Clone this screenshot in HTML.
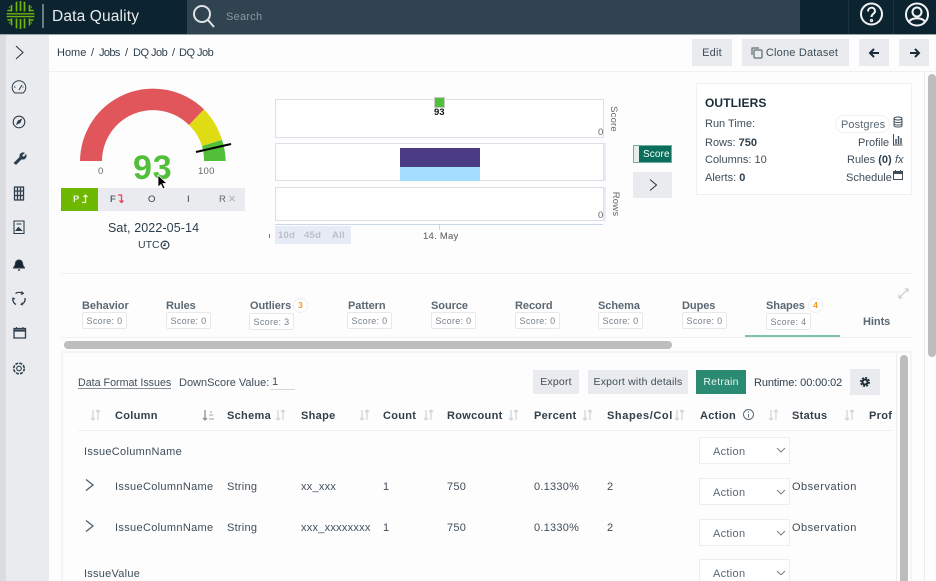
<!DOCTYPE html>
<html><head><meta charset="utf-8"><style>
*{box-sizing:border-box}
html,body{margin:0;padding:0;width:936px;height:581px;overflow:hidden;background:#fdfdfd}
body{position:relative;font-family:"Liberation Sans",sans-serif;font-size:11px;color:#3f4d5a}
.a{position:absolute}
.t{position:absolute;white-space:nowrap;line-height:14px;letter-spacing:.25px}
.c{letter-spacing:0}
.b{font-weight:bold}
.btn{position:absolute;background:#e9ebee;color:#3f4d5a;text-align:center;white-space:nowrap;letter-spacing:.2px}
.sc{position:absolute;width:45px;height:17px;border:1px solid #e6e8ea;border-radius:2px;background:#fff;font-size:9px;color:#77818a;text-align:center;line-height:17px;letter-spacing:.3px}
.tb{position:absolute;font-weight:bold;color:#5b6873;white-space:nowrap;font-size:11px;line-height:14px;letter-spacing:-.05px}
.bd{position:absolute;width:15px;height:15px;border:1px solid #eee;border-radius:50%;background:#fff;color:#f7941d;font-size:8.5px;font-weight:bold;text-align:center;line-height:13px}
.th{position:absolute;font-weight:bold;color:#333f49;white-space:nowrap;line-height:14px;top:409px;letter-spacing:.3px}
.sel{position:absolute;left:699px;width:91px;height:27px;border:1px solid #eceef0;background:#fff;color:#5a6670;line-height:29px;padding-left:13px;letter-spacing:.3px}
</style></head><body>

<!-- top bar -->
<div class="a" style="left:0;top:0;width:936px;height:34px;background:#0c2430"></div>
<div class="a" style="left:187px;top:0;width:613px;height:34px;background:#2f4350"></div>
<div class="a" style="left:0;top:34px;width:936px;height:1px;background:#9aa3a9"></div>
<svg class="a" style="left:0;top:0" width="60" height="34" fill="none" stroke="#6fb50a" stroke-width="2">
<defs><clipPath id="lc"><circle cx="20.500" cy="15" r="14"/></clipPath></defs>
<g clip-path="url(#lc)">
<path d="M6 13.800H35M6 16.600H35" stroke-width="1.400"/>
<path d="M20.500 1v10M20.500 19v11M16.500 1v10.500M16.500 18.500v11M24.500 1v10.500M24.500 18.500v11" stroke-width="1.700"/>
<path d="M11.500 5v6.500M11.500 18.500v7M29.500 5v6.500M29.500 18.500v7" stroke-width="1.700"/>
<path d="M6 10.500h6M29 10.500h6M6 20h6M29 20h6M7 7h3M31 7h3M7 23h3M31 23h3" stroke-width="1.500"/>
</g>
<path d="M43 4V28" stroke="#8d979d" stroke-width="1.500"/>
</svg>
<div class="t" style="left:52px;top:7px;font-size:15.500px;line-height:19px;color:#e8ecee;letter-spacing:.15px">Data Quality</div>
<svg class="a" style="left:191px;top:3px" width="26" height="26" fill="none" stroke="#e0e4e6" stroke-width="2"><circle cx="11" cy="11" r="8"/><path d="M17 17l6 7"/></svg>
<div class="t" style="left:226px;top:10px;font-size:11px;color:#8a98a1">Search</div>
<div class="a" style="left:848px;top:0;width:1px;height:34px;background:#1c3542"></div>
<div class="a" style="left:893px;top:0;width:1px;height:34px;background:#1c3542"></div>
<svg class="a" style="left:859px;top:2px" width="25" height="25" fill="none" stroke="#f2f4f5" stroke-width="2"><circle cx="12.500" cy="12" r="10.500"/><path d="M9 9.500c0-5 7-5 7-.5 0 3-3.500 2.500-3.500 6"/><circle cx="12.500" cy="18.500" r=".6"/></svg>
<svg class="a" style="left:904px;top:2px" width="26" height="26" fill="none" stroke="#f2f4f5" stroke-width="2"><circle cx="13" cy="12.500" r="11"/><circle cx="13" cy="10" r="4.500"/><path d="M5 20c2-5 14-5 16 0"/></svg>

<!-- sidebar -->
<div class="a" style="left:0;top:35px;width:49px;height:546px;background:#e9ebee"></div>
<div class="a" style="left:0;top:35px;width:6px;height:546px;background:#dadcdf"></div>
<svg class="a" style="left:0;top:35px" width="49" height="546" fill="none" stroke="#2c3e4c" stroke-width="1.100">
<path d="M16 11l7 6.500-7 6.500"/>
<path d="M15 58a6.800 6.800 0 1 1 8 0zM19 55l3-5M14 52h1.500M22.500 52h1" stroke-width="1"/>
<circle cx="19" cy="87" r="5.800"/><path d="M17 89l1.200-3 3-1.500-1.200 3z" fill="#2c3e4c"/>
<path d="M14 128l6-6c-1-3 2-5 4.500-4l-2.500 2 .5 1.500 1.500.5 2-2.500c1 3-1.500 5.500-4.500 4.500l-5.500 5.500z" fill="#2c3e4c" stroke-width=".6"/>
<path d="M14.500 152h9v13h-9zM17.500 152v13M20.500 152v13M14.500 156h9M14.500 160.500h9" stroke-width="1.300"/>
<path d="M14 186h10v12.500H14z"/><path d="M16 195.500l2.500-3 3 3zM16.500 189h5" fill="#2c3e4c" stroke-width="1"/>
<path d="M13.500 233c0-1 2-1.500 2-4.500a3.500 3.500 0 0 1 7 0c0 3 2 3.500 2 4.500z" fill="#15242f"/><path d="M18 235h2" stroke-width="1.400"/>
<path d="M15.500 258.500a6 6 0 0 1 7 0M25 263a6 6 0 0 1-2.500 6M16 269.500a6 6 0 0 1-3-6" stroke-width="1.300"/>
<path d="M21.500 256.500l2 2-2.500 1M23 270l-2-.5 1.500-2M12.500 265.500l.5-2.500 2 1" stroke-width="1"/>
<path d="M14 293.500h11.500v9.500H14z" stroke-width="1.300"/><path d="M14 295.500h11.500" stroke-width="2.200"/><path d="M16.500 292v2M23 292v2"/>
<circle cx="19" cy="333.500" r="2.300"/><circle cx="19" cy="333.500" r="5.300" stroke-dasharray="3 1.200" stroke-width="1.600"/>
</svg>

<!-- breadcrumb -->
<div class="a" style="left:49px;top:71px;width:887px;height:1px;background:#eef0f1"></div>
<div class="t c" style="left:57px;top:46px;color:#2c3e4c">Home</div>
<div class="t c" style="left:91px;top:46px;color:#2c3e4c">/</div>
<div class="t" style="left:99px;top:46px;color:#2c3e4c;letter-spacing:-.6px">Jobs</div>
<div class="t c" style="left:125px;top:46px;color:#2c3e4c">/</div>
<div class="t" style="left:133px;top:46px;color:#2c3e4c;letter-spacing:-.5px">DQ Job</div>
<div class="t c" style="left:172px;top:46px;color:#2c3e4c">/</div>
<div class="t" style="left:179px;top:46px;color:#2c3e4c;letter-spacing:-.5px">DQ Job</div>
<div class="btn" style="left:692px;top:39px;width:40px;height:27px;line-height:28px">Edit</div>
<div class="btn" style="left:742px;top:39px;width:107px;height:27px;line-height:28px;padding-left:13px">Clone Dataset</div>
<svg class="a" style="left:751px;top:47px" width="13" height="12" fill="none" stroke="#3f4d5a"><path d="M1 8V1h7"/><rect x="3" y="3" width="8" height="8" rx="1"/></svg>
<div class="btn" style="left:859px;top:39px;width:30px;height:27px"></div>
<div class="btn" style="left:899px;top:39px;width:30px;height:27px"></div>
<svg class="a" style="left:868px;top:46px" width="54" height="14" fill="none" stroke="#1c2c38" stroke-width="2"><path d="M11 7H2M6 3L2 7l4 4M42 7h9M47 3l4 4-4 4"/></svg>

<!-- scrollbars -->
<div class="a" style="left:924px;top:72px;width:1px;height:509px;background:#eceef0"></div>
<div class="a" style="left:928px;top:74px;width:8px;height:283px;background:#bdbdbd;border-radius:4px"></div>

<!-- gauge -->
<svg class="a" style="left:70px;top:80px" width="170" height="90">
<path d="M10 81A73 73 0 0 1 134 29.400L119 45A51 51 0 0 0 32 81Z" fill="#e0565b"/>
<path d="M134 29.400A73 73 0 0 1 152 60L132 66A51 51 0 0 0 119 45Z" fill="#e0dc14"/>
<path d="M152 60A73 73 0 0 1 155.700 81H134A51 51 0 0 0 132 66Z" fill="#52bf3b"/>
<path d="M126 72L161 64" stroke="#000" stroke-width="2"/>
</svg>
<div class="t" style="left:98px;top:165px;font-size:9.500px;color:#666">0</div>
<div class="t" style="left:198px;top:165px;font-size:9.500px;color:#666">100</div>
<div class="t" style="left:133px;top:149px;font-size:34px;line-height:38px;color:#52bf3b;font-weight:bold;letter-spacing:.8px">93</div>
<div class="a" style="left:61px;top:188px;width:184px;height:23px;background:#e9ebee"></div>
<div class="a" style="left:61px;top:188px;width:37px;height:23px;background:#6eb800"></div>
<div class="t b" style="left:73px;top:193px;color:#eef7dc;font-size:9.500px">P</div>
<svg class="a" style="left:81px;top:194px" width="8" height="10" fill="none" stroke="#eef7dc" stroke-width="1.300"><path d="M1 8.500h3.500V1M2.500 3l2-2 2 2"/></svg>
<div class="t b" style="left:110px;top:193px;color:#5b6873;font-size:9.500px">F</div>
<svg class="a" style="left:117px;top:194px" width="8" height="10" fill="none" stroke="#f0405a" stroke-width="1.300"><path d="M1 1h3.500v7.500M2.500 6.500l2 2 2-2"/></svg>
<div class="t" style="left:148px;top:193px;color:#2c3e4c;font-size:9.500px">O</div>
<div class="t" style="left:187px;top:193px;color:#2c3e4c;font-size:9.500px">I</div>
<div class="t" style="left:219px;top:193px;color:#5b6873;font-size:9.500px">R</div>
<div class="t b" style="left:228px;top:193px;color:#b9bec3;font-size:9.500px">✕</div>
<svg class="a" style="left:155px;top:174px" width="14" height="18"><path d="M3 1v12l3-2.500 2 4.500 2-1-2-4.500h4z" fill="#000" stroke="#fff" stroke-width=".8"/></svg>
<div class="t" style="left:108px;top:221px;font-size:12.500px;line-height:15px;color:#2c3e4c;letter-spacing:.1px">Sat, 2022-05-14</div>
<div class="t c" style="left:138px;top:238px;color:#2c3e4c;font-size:10.500px">UTC</div>
<svg class="a" style="left:160px;top:240px" width="10" height="10" fill="none" stroke="#2c3e4c" stroke-width="1.200"><circle cx="5" cy="5" r="3.900"/><path d="M5 2.800V5.500H3"/></svg>
<div class="a" style="left:61px;top:273px;width:851px;height:1px;background:#eef0f1"></div>

<!-- chart -->
<div class="a" style="left:275px;top:99px;width:329px;height:39px;border:1px solid #dcdfe6;background:#fff"></div>
<div class="a" style="left:275px;top:143px;width:329px;height:38px;border:1px solid #dcdfe6;background:#fff"></div>
<div class="a" style="left:275px;top:187px;width:329px;height:34px;border:1px solid #dcdfe6;background:#fff"></div>
<div class="a" style="left:604px;top:143px;width:2px;height:38px;background:#e8ecf5"></div>
<div class="a" style="left:604px;top:187px;width:2px;height:34px;background:#e8ecf5"></div>
<div class="a" style="left:400px;top:148px;width:80px;height:19px;background:#4b3b85"></div>
<div class="a" style="left:400px;top:167px;width:80px;height:14px;background:#a3ddff"></div>
<div class="a" style="left:434px;top:97px;width:11px;height:11px;background:#52bf3b;border:1px solid #c9ccc9"></div>
<div class="t b" style="left:434px;top:106px;font-size:9.500px;color:#111;letter-spacing:0">93</div>
<div class="t" style="left:598px;top:126px;font-size:9.500px;color:#666;letter-spacing:0">0</div>
<div class="t" style="left:598px;top:209px;font-size:9.500px;color:#666;letter-spacing:0">0</div>
<div class="t" style="left:600px;top:112px;font-size:9.500px;color:#666;transform:rotate(90deg);width:26px;text-align:center;letter-spacing:.2px">Score</div>
<div class="t" style="left:602px;top:197px;font-size:9.500px;color:#666;transform:rotate(90deg);width:26px;text-align:center;letter-spacing:.2px">Rows</div>
<div class="a" style="left:275px;top:224px;width:328px;height:1px;background:#ccd6eb"></div>
<div class="a" style="left:439px;top:224px;width:1px;height:6px;background:#ccd6eb"></div>
<div class="a" style="left:269px;top:234px;width:1px;height:4px;background:#777"></div>
<div class="a" style="left:275px;top:226px;width:76px;height:18px;background:#e6ebf5"></div>
<div class="t b" style="left:278px;top:229px;font-size:9.500px;color:#bcc0c6">10d</div>
<div class="t b" style="left:304px;top:229px;font-size:9.500px;color:#bcc0c6">45d</div>
<div class="t b" style="left:332px;top:229px;font-size:9.500px;color:#bcc0c6">All</div>
<div class="t" style="left:423px;top:230px;font-size:9.500px;color:#555">14. May</div>
<div class="a" style="left:633px;top:145px;width:39px;height:18px;background:#0b6e5c;border:1px solid #6fb0a2"></div>
<div class="a" style="left:634px;top:146px;width:5px;height:16px;background:#e6eeec"></div>
<div class="t" style="left:643px;top:148px;font-size:10px;color:#fff;letter-spacing:.1px">Score</div>
<div class="a" style="left:633px;top:172px;width:39px;height:26px;background:#e9ebee"></div>
<svg class="a" style="left:648px;top:178px" width="10" height="14" fill="none" stroke="#2c3e4c" stroke-width="1.100"><path d="M2 1.500L8.500 7 2 12.500"/></svg>

<!-- outliers card -->
<div class="a" style="left:696px;top:83px;width:216px;height:112px;border:1px solid #eef0f1;background:#fff"></div>
<div class="t b" style="left:705px;top:96px;font-size:12px;color:#1c2c38;letter-spacing:.1px">OUTLIERS</div>
<div class="t c" style="left:705px;top:117px">Run Time:</div>
<div class="t c" style="left:705px;top:136px">Rows: <b style="color:#2c3e4c">750</b></div>
<div class="t c" style="left:705px;top:153px">Columns: 10</div>
<div class="t c" style="left:705px;top:171px">Alerts: <b style="color:#2c3e4c">0</b></div>
<div class="a" style="left:835px;top:115px;width:55px;height:18px;border:1px solid #eef0f6;border-radius:9px"></div>
<div class="t" style="left:841px;top:118px;color:#5b6873;letter-spacing:.1px">Postgres</div>
<div class="t c" style="left:858px;top:136px">Profile</div>
<div class="t c" style="left:847px;top:153px">Rules <b style="color:#2c3e4c">(0)</b></div>
<div class="t c" style="left:895px;top:153px;font-style:italic">fx</div>
<div class="t c" style="left:846px;top:171px">Schedule</div>
<svg class="a" style="left:892px;top:116px" width="12" height="70" fill="none" stroke="#3f4d5a">
<ellipse cx="6" cy="2.500" rx="4" ry="1.500"/><path d="M2 2.500v7c0 2 8 2 8 0v-7M2 5c0 2 8 2 8 0M2 7.500c0 2 8 2 8 0"/>
<path d="M1.500 18v11h9" /><path d="M4 28v-5M6.500 28v-8M9 28v-6" stroke-width="1.400"/>
<rect x="1.500" y="55.500" width="9" height="8"/><path d="M1.500 57h9" stroke-width="2"/><path d="M3.500 54v2M8.500 54v2"/>
</svg>

<!-- tabs -->
<div class="tb" style="left:82px;top:299px">Behavior</div><div class="sc" style="left:82px;top:312px">Score: 0</div>
<div class="tb" style="left:166px;top:299px">Rules</div><div class="sc" style="left:166px;top:312px">Score: 0</div>
<div class="tb" style="left:250px;top:299px">Outliers</div><div class="bd" style="left:293px;top:298px">3</div><div class="sc" style="left:249px;top:313px">Score: 3</div>
<div class="tb" style="left:348px;top:299px">Pattern</div><div class="sc" style="left:347px;top:312px">Score: 0</div>
<div class="tb" style="left:431px;top:299px">Source</div><div class="sc" style="left:431px;top:312px">Score: 0</div>
<div class="tb" style="left:515px;top:299px">Record</div><div class="sc" style="left:515px;top:312px">Score: 0</div>
<div class="tb" style="left:598px;top:299px">Schema</div><div class="sc" style="left:598px;top:312px">Score: 0</div>
<div class="tb" style="left:682px;top:299px">Dupes</div><div class="sc" style="left:682px;top:312px">Score: 0</div>
<div class="tb" style="left:766px;top:299px">Shapes</div><div class="bd" style="left:808px;top:298px">4</div><div class="sc" style="left:766px;top:313px">Score: 4</div>
<div class="tb" style="left:863px;top:315px">Hints</div>
<svg class="a" style="left:898px;top:288px" width="11" height="11" fill="none" stroke="#c4c8cb"><path d="M1 10L10 1M1 6.500V10h3.500M6.500 1H10v3.500"/></svg>
<div class="a" style="left:61px;top:337px;width:851px;height:1px;background:#eef0f1"></div>
<div class="a" style="left:745px;top:335px;width:95px;height:2px;background:#7fc0ae"></div>
<div class="a" style="left:64px;top:341px;width:608px;height:8px;background:#bdbdbd;border-radius:4px"></div>

<!-- panel -->
<div class="a" style="left:61px;top:351px;width:851px;height:230px;border:2px solid #f3f4f5;border-bottom:0;background:#fdfdfd"></div>
<div class="a" style="left:896px;top:353px;width:1px;height:228px;background:#eceef0"></div>
<div class="a" style="left:900px;top:355px;width:8px;height:226px;background:#bdbdbd;border-radius:4px 4px 0 0"></div>
<div class="t c" style="left:78px;top:376px;font-size:10.700px">Data Format Issues</div>
<div class="a" style="left:78px;top:388px;width:93px;height:1px;background:#8a9097"></div>
<div class="t" style="left:179px;top:376px;letter-spacing:0">DownScore Value:</div>
<div class="t" style="left:272px;top:375px">1</div>
<div class="a" style="left:271px;top:389px;width:24px;height:1px;background:#d5d8da"></div>
<div class="btn" style="left:533px;top:370px;width:46px;height:24px;line-height:25px;font-size:10.500px">Export</div>
<div class="btn" style="left:588px;top:370px;width:100px;height:24px;line-height:25px;font-size:10.500px">Export with details</div>
<div class="btn" style="left:696px;top:370px;width:50px;height:24px;line-height:25px;font-size:10.500px;background:#2b8a72;color:#e8f4f0">Retrain</div>
<div class="t" style="left:754px;top:376px;color:#2c3e4c;letter-spacing:-.1px">Runtime: 00:00:02</div>
<div class="btn" style="left:850px;top:369px;width:30px;height:26px"></div>
<svg class="a" style="left:859px;top:376px" width="12" height="12" fill="none" stroke="#1c2c38"><circle cx="6" cy="6" r="2.500" stroke-width="2"/><circle cx="6" cy="6" r="4.200" stroke-width="1.600" stroke-dasharray="2 1.300"/></svg>

<!-- table header -->
<div class="th" style="left:115px">Column</div>
<div class="th" style="left:227px">Schema</div>
<div class="th" style="left:301px">Shape</div>
<div class="th" style="left:383px">Count</div>
<div class="th" style="left:447px">Rowcount</div>
<div class="th" style="left:534px">Percent</div>
<div class="th" style="left:607px;letter-spacing:.6px">Shapes/Col</div>
<div class="th" style="left:700px">Action</div>
<div class="th" style="left:792px">Status</div>
<div class="th" style="left:869px;width:23px;overflow:hidden">Profile</div>
<svg class="a" style="left:0;top:409px" width="900" height="14" fill="none" stroke="#d3d6d9" stroke-width="1.300">
<path d="M93 1v10M91 9l2 2 2-2M98 11V1M96 3l2-2 2 2"/>
<path d="M278 1v10M276 9l2 2 2-2M283 11V1M281 3l2-2 2 2"/>
<path d="M362 1v10M360 9l2 2 2-2M367 11V1M365 3l2-2 2 2"/>
<path d="M426 1v10M424 9l2 2 2-2M431 11V1M429 3l2-2 2 2"/>
<path d="M511 1v10M509 9l2 2 2-2M516 11V1M514 3l2-2 2 2"/>
<path d="M585 1v10M583 9l2 2 2-2M590 11V1M588 3l2-2 2 2"/>
<path d="M677 1v10M675 9l2 2 2-2M682 11V1M680 3l2-2 2 2"/>
<path d="M771 1v10M769 9l2 2 2-2M776 11V1M774 3l2-2 2 2"/>
<path d="M847 1v10M845 9l2 2 2-2M852 11V1M850 3l2-2 2 2"/>
<path d="M205 1v10M203 9l2 2 2-2" stroke="#8a9097"/><path d="M210 3h2M209.500 6h3.500M209 10h5" stroke="#b0b4b8"/>
</svg>
<svg class="a" style="left:742px;top:408px" width="14" height="14" fill="none" stroke="#5b6873"><circle cx="6.500" cy="6.500" r="5"/><path d="M6.500 6v3.500M6.500 3.500v1"/></svg>
<div class="a" style="left:78px;top:430px;width:814px;height:1px;background:#eef0f1"></div>

<!-- rows -->
<div class="t" style="left:84px;top:445px;letter-spacing:.3px">IssueColumnName</div>
<div class="t" style="left:84px;top:567px">IssueValue</div>
<svg class="a" style="left:84px;top:478px" width="12" height="60" fill="none" stroke="#4d6070" stroke-width="1.300"><path d="M2 1.500L9 7 2 12.500M2 42.500L9 48 2 53.500"/></svg>
<div class="t" style="left:115px;top:480px;letter-spacing:.33px">IssueColumnName</div>
<div class="t" style="left:227px;top:480px">String</div>
<div class="t" style="left:301px;top:480px">xx_xxx</div>
<div class="t" style="left:383px;top:480px">1</div>
<div class="t" style="left:447px;top:480px">750</div>
<div class="t" style="left:534px;top:480px">0.1330%</div>
<div class="t" style="left:607px;top:480px">2</div>
<div class="t" style="left:792px;top:480px;letter-spacing:.5px">Observation</div>
<div class="t" style="left:115px;top:521px;letter-spacing:.33px">IssueColumnName</div>
<div class="t" style="left:227px;top:521px">String</div>
<div class="t" style="left:301px;top:521px">xxx_xxxxxxxx</div>
<div class="t" style="left:383px;top:521px">1</div>
<div class="t" style="left:447px;top:521px">750</div>
<div class="t" style="left:534px;top:521px">0.1330%</div>
<div class="t" style="left:607px;top:521px">2</div>
<div class="t" style="left:792px;top:521px;letter-spacing:.5px">Observation</div>
<div class="sel" style="top:437px">Action</div>
<div class="sel" style="top:478px">Action</div>
<div class="sel" style="top:519px">Action</div>
<div class="sel" style="top:559px">Action</div>
<svg class="a" style="left:776px;top:445px" width="10" height="130" fill="none" stroke="#77818a"><path d="M1 3l4 4 4-4M1 45l4 4 4-4M1 86l4 4 4-4M1 126l4 4 4-4"/></svg>
</body></html>
